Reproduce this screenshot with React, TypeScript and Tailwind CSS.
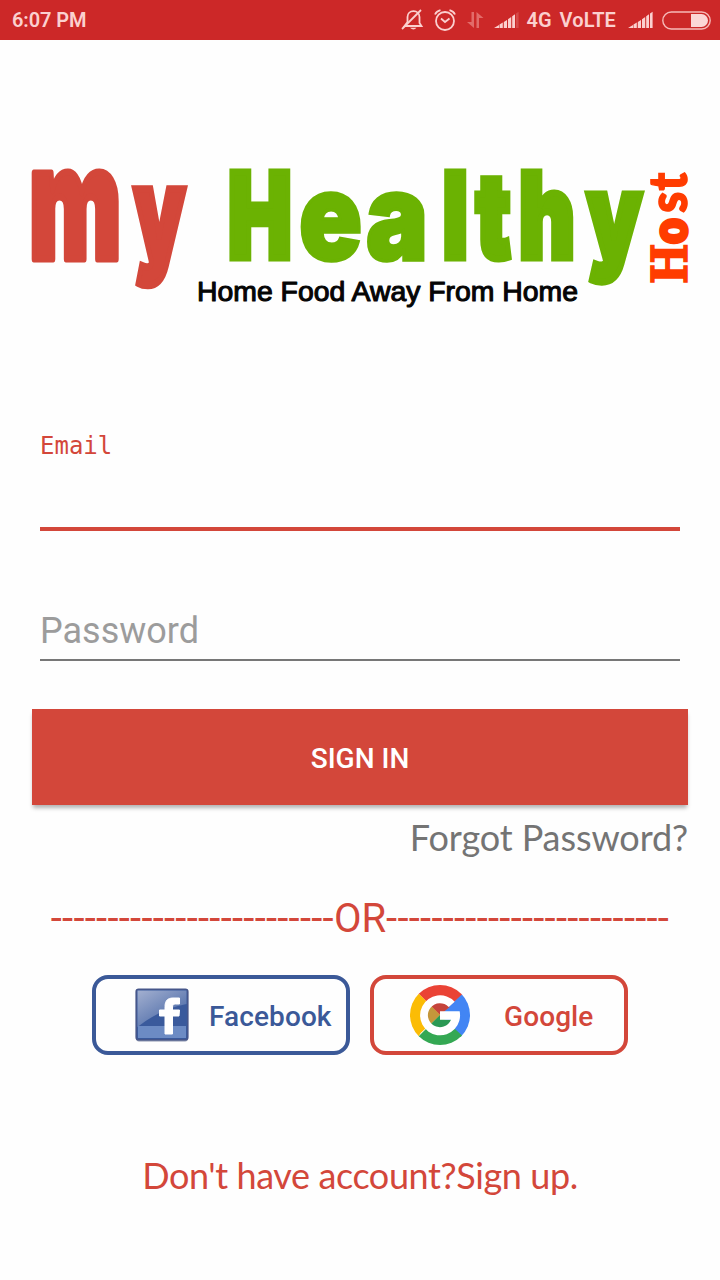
import React from "react";

const DASHES = "-".repeat(25);

function SignalBars({ weak = false }: { weak?: boolean }) {
  return (
    <svg className="h-5 w-[26px]" viewBox="0 0 26 20" fill="#fbd0cf">
      <path d="M0 18 L5 15 V18Z M5.5 14.5 L8.8 12.5 V18 H5.5Z M9.8 12 L13 10 V18 H9.8Z M14 9.2 L17.2 7 V18 H14Z" />
      <path d="M18.2 6.2 L21 4.3 V18 H18.2Z" />
      <path d="M22 3.5 L24.6 1.8 V18 H22Z" opacity={weak ? 0.2 : 1} />
    </svg>
  );
}

function StatusBar() {
  return (
    <header className="flex h-10 shrink-0 items-center bg-[#cc2828] pl-3 pr-[9px] text-[20px] font-semibold text-[#fbd0cf]">
      <span className="leading-5 tracking-[-0.1px]">6:07 PM</span>
      <div className="ml-auto flex items-center">
        <svg className="h-6 w-6" viewBox="0 0 24 24" fill="none" stroke="#fbd0cf" strokeWidth="1.8">
          <path d="M3.5 18H20.5L18.5 15V9C18.5 5.5 16 3.2 12.5 3.2S6.5 5.5 6.5 9V14L3.5 18Z" />
          <path d="M1 21 L20 2" />
          <path d="M9 19.8H15.5Q12.5 23 9 19.8Z" fill="#fbd0cf" stroke="none" />
        </svg>
        <svg className="ml-2 h-6 w-6" viewBox="0 0 24 24" fill="none" stroke="#fbd0cf" strokeWidth="1.8">
          <circle cx="12" cy="13" r="9" />
          <path d="M8 10.5 L12 14 L16.5 10.5 M2 6.5 Q3.5 3.2 7.5 2.2 M22 6.5 Q20.5 3.2 16.5 2.2" />
        </svg>
        <svg className="ml-[9px] h-5 w-[18px]" viewBox="0 0 18 20" fill="#e26b69">
          <path d="M5.5 2H8V18L1 12H5.5Z M10.5 18H13V8H17.5L10.5 2Z" />
        </svg>
        <div className="ml-[10px] flex"><SignalBars weak /></div>
        <span className="ml-[7px] leading-5">4G</span>
        <span className="ml-2 leading-5 tracking-[0.1px]">VoLTE</span>
        <div className="ml-3 flex"><SignalBars /></div>
        <svg className="ml-2 h-5 w-[49px]" viewBox="0 0 49 20">
          <rect x="0.8" y="2" width="47.4" height="17" rx="8.5" fill="none" stroke="#f6b9b7" strokeWidth="1.4" />
          <path d="M29 4H39.5A6.5 6.5 0 0 1 39.5 17H29Z" fill="#fbd7d6" />
        </svg>
      </div>
    </header>
  );
}

function Logo() {
  return (
    <svg className="h-[150px] w-[656px] shrink-0 overflow-visible" viewBox="32 162 656 150" role="img">
      <g fontFamily="Inter, sans-serif" fontWeight="900" fontSize="118" strokeWidth="7">
        <g fill="#d3473a" stroke="#d3473a">
          <text className="lowercase" transform="translate(29 259) scale(0.62 1)" fontSize="158" strokeLinejoin="round">M</text>
          <text transform="translate(132 259) scale(0.68 1.08)" x="3">y</text>
        </g>
        <g fill="#6bb202" stroke="#6bb202">
          <text transform="translate(225 258) scale(0.72 1)" x="4">H</text>
          <text transform="translate(299 260) scale(0.86 1)" x="0 78" fontSize="121" strokeWidth="3.5">ea</text>
          <text transform="translate(0 258) scale(0.73 1)" x="606 652 711 804">lthy</text>
        </g>
      </g>
      <text x="197" y="301" textLength="381" lengthAdjust="spacingAndGlyphs" fontFamily="Liberation Sans, sans-serif" fontSize="28" fill="#050505" stroke="#050505" strokeWidth="1.1" strokeLinejoin="round">
        Home Food Away From Home
      </text>
      <text transform="translate(687 284) rotate(-90) scale(0.89 1)" x="0 44 80 105" fontFamily="DejaVu Serif, serif" fontWeight="700" fontSize="48" fill="#ff3c00" stroke="#ff3c00" strokeWidth="1.6">
        H<tspan fontFamily="Inter, sans-serif" fontWeight="900" fontSize="49">o</tspan><tspan fontFamily="Lato, sans-serif" fontWeight="900" fontSize="53">st</tspan>
      </text>
    </svg>
  );
}

function FacebookIcon() {
  return (
    <svg className="h-[54px] w-[54px]" viewBox="0 0 54 54">
      <defs>
        <linearGradient id="fb-shine" x1="0" y1="0" x2="0.8" y2="1">
          <stop offset="0" stopColor="#a3b0d0" />
          <stop offset="1" stopColor="#4464a4" />
        </linearGradient>
      </defs>
      <rect x="1" y="1.5" width="52" height="52" rx="3" fill="#8b94ad" />
      <rect x="1.2" y="1.2" width="51.6" height="50.6" rx="2.5" fill="#3a5a9c" stroke="#46568a" strokeWidth="1.6" />
      <path d="M2.5 2.5H51.5V16Q25 21 2.5 39Z" fill="url(#fb-shine)" />
      <rect x="3" y="38" width="48" height="12" fill="#6c8bc4" />
      <path d="M30 46V28H24.5V22H30V18.5C30 12.5 33 10 38 10H44.5V16H40.5C38.5 16 37.5 17 37.5 19V22H44.5L44 28H37.5V46Z" fill="#fff" stroke="#fff" />
    </svg>
  );
}

function GoogleIcon() {
  return (
    <svg className="h-[60px] w-[60px]" viewBox="0 0 180 180">
      <defs>
        <clipPath id="google-disc"><circle cx="90" cy="90" r="90" /></clipPath>
      </defs>
      <g clipPath="url(#google-disc)">
        <path d="M90 90L20 20V-10H170V18Z" fill="#ea4335" />
        <path d="M90 90L170 15H190V175H170Z" fill="#4285f4" />
        <path d="M90 90L20 160V190H160V155Z" fill="#34a853" />
        <path d="M90 90L28 28L-5 0V180H10L32 144Z" fill="#fbbc05" />
      </g>
      <path d="M90 90L63 63A38 38 0 0 1 112 59L119 66Z" fill="#c5443b" />
      <path d="M90 90L63 63A38 38 0 0 0 63 117Z" fill="#c4973b" />
      <path d="M90 90L63 117A38 38 0 0 0 119 113L126 104H90Z" fill="#2b9954" />
      <path d="M134 50A60 60 0 1 0 149 79H90V104H123A36 36 0 1 1 116 66Z" fill="#fff" />
    </svg>
  );
}

export default function App() {
  return (
    <div className="flex h-[1280px] w-[720px] flex-col overflow-hidden bg-[#fefefe] font-['Roboto',sans-serif]">
      <StatusBar />
      <main className="flex flex-1 flex-col px-8 pt-[122px]">
        <Logo />
        <div className="mx-2 mt-[118px] flex h-[101px] flex-col justify-between border-b-4 border-[#d3473a]">
          <label className="font-['DejaVu_Sans_Mono',monospace] text-[24px] leading-8 text-[#d3473a]">Email</label>
        </div>
        <div className="mx-2 mt-[78px] flex h-[52px] items-start border-b-2 border-[#777]">
          <span className="pt-px text-[36px] leading-[42px] text-[#9c9c9c]">Password</span>
        </div>
        <button className="mt-[48px] flex h-24 shrink-0 items-center justify-center bg-[#d3473a] pt-[3px] text-[28px] font-medium text-white shadow-[0_4px_4px_-1px_rgba(0,0,0,0.3)]">
          SIGN IN
        </button>
        <a className="mt-[10px] self-end font-['Lato',sans-serif] text-[36px] leading-[44px] tracking-[-0.1px] text-[#747474]">Forgot Password?</a>
        <div className="mt-[36px] flex items-center justify-center text-[40px] leading-[48px] text-[#d3473a]">
          <span className="tracking-[0.27px]">{DASHES}</span>
          <span>OR</span>
          <span className="tracking-[0.27px]">{DASHES}</span>
        </div>
        <div className="mt-[32px] flex justify-center gap-5">
          <button className="flex h-20 w-[258px] items-center rounded-2xl border-4 border-[#3b5998] pl-[39px] text-[28px] font-medium text-[#3b5998]">
            <FacebookIcon />
            <span className="ml-5 pt-[3px] tracking-[0.1px]">Facebook</span>
          </button>
          <button className="flex h-20 w-[258px] items-center rounded-2xl border-4 border-[#d3473a] pl-9 text-[28px] font-medium text-[#d3473a]">
            <GoogleIcon />
            <span className="ml-[34px] pt-[3px] tracking-[0.1px]">Google</span>
          </button>
        </div>
        <a className="mt-[98px] text-center font-['Lato',sans-serif] text-[36px] leading-[44px] tracking-[-0.4px] text-[#d3473a]">Don't have account?Sign up.</a>
      </main>
    </div>
  );
}
